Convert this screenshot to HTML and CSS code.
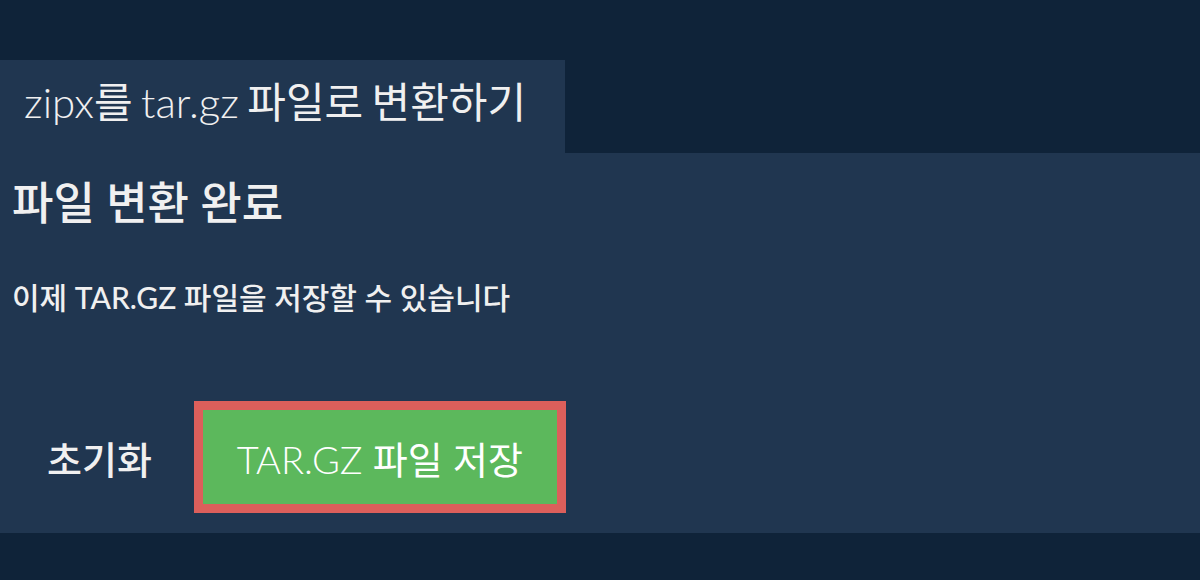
FILE: index.html
```html
<!DOCTYPE html>
<html>
<head>
  <title>zipx를 tar.gz 파일로 변환하기</title>
  <link rel="stylesheet" href="styles.css">
</head>
<body>
  <div id="mainContainer">
    <div class="tab">
      <h1>zipx를 tar.gz 파일로 변환하기</h1>
    </div>
    <div class="panel">
      <h2>파일 변환 완료</h2>
      <p class="message">이제 TAR.GZ 파일을 저장할 수 있습니다</p>
      <div class="actions">
        <button class="resetButton" type="button">초기화</button>
        <button class="saveButton" type="button">TAR.GZ 파일 저장</button>
      </div>
    </div>
  </div>
</body>
</html>
```

FILE: styles.css
```css
body {
  background-color: #0f2339;
  color: #f0f0f0;
  font-family: Lato, "Noto Sans CJK KR", sans-serif;
  margin: 0;
  padding: 0;
}

#mainContainer {
  padding-top: 60px;
}

.tab {
  display: inline-block;
  background-color: #203650;
  height: 93px;
  padding: 0 24px;
  width: 517px;
}

.tab h1 {
  margin: 0;
  font-family: "Lato Light", "Noto Sans CJK KR", sans-serif;
  font-size: 42px;
  font-weight: 400;
  line-height: 84px;
  word-spacing: -3px;
  white-space: nowrap;
}

.panel {
  background-color: #203650;
  height: 380px;
  padding: 0 12px;
  box-sizing: border-box;
  display: flex;
  flex-direction: column;
}

.panel h2 {
  margin: 20px 0 0;
  font-size: 45px;
  font-weight: 500;
  line-height: 60px;
}

.message {
  margin: 44px 0 0;
  font-size: 30px;
  font-weight: 500;
  line-height: 40px;
}

.actions {
  display: flex;
  align-items: center;
  gap: 26px;
  margin-top: 84px;
}

.resetButton {
  background: none;
  border: none;
  color: #f0f0f0;
  font-family: inherit;
  font-size: 38px;
  font-weight: 500;
  padding: 0 16px 0 47px;
  margin-left: -12px;
  cursor: pointer;
}

.saveButton {
  background-color: #5cb85c;
  border: 9px solid #dc5f5b;
  color: #fff;
  font-family: "Lato Light", "Noto Sans CJK KR", sans-serif;
  font-size: 38px;
  font-weight: 400;
  width: 372px;
  height: 112px;
  padding: 0;
  cursor: pointer;
}
```
